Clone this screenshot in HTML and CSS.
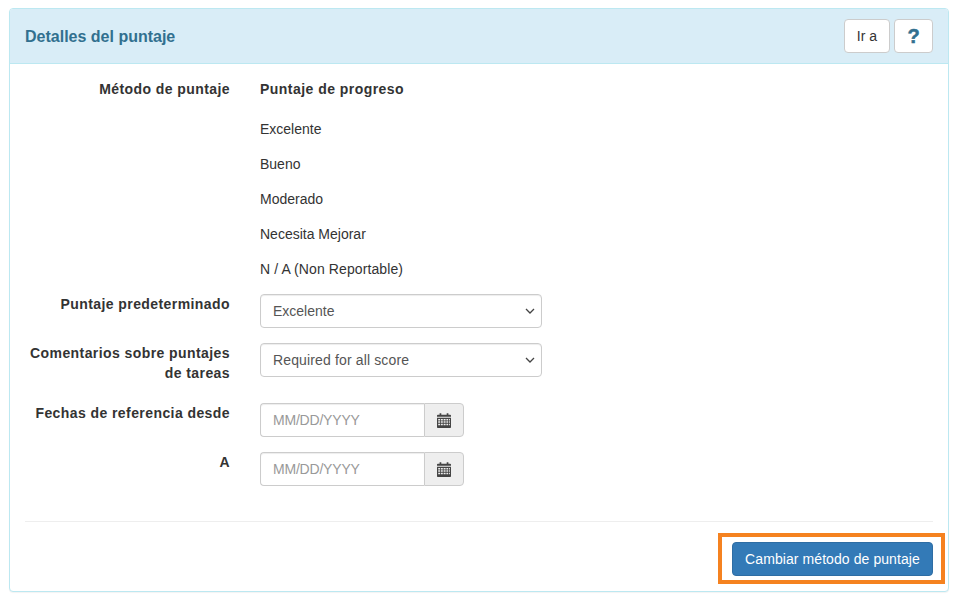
FILE: index.html
```html
<!DOCTYPE html>
<html lang="es">
<head>
<meta charset="utf-8">
<title>Detalles del puntaje</title>
<link rel="stylesheet" href="styles.css">
</head>
<body>
<section class="panel">
  <header class="panel-heading">
    <h3 class="panel-title">Detalles del puntaje</h3>
    <div class="heading-actions">
      <button class="btn btn-default" type="button">Ir a</button>
      <button class="btn btn-default btn-help" type="button">?</button>
    </div>
  </header>
  <div class="panel-body">
    <form class="form-grid">
      <label class="form-label">Método de puntaje</label>
      <div class="value value-strong">Puntaje de progreso</div>
      <span></span><div class="value">Excelente</div>
      <span></span><div class="value">Bueno</div>
      <span></span><div class="value">Moderado</div>
      <span></span><div class="value">Necesita Mejorar</div>
      <span></span><div class="value value-wide">N / A (Non Reportable)</div>

      <label class="form-label">Puntaje predeterminado</label>
      <select class="form-control select-wide"><option>Excelente</option></select>

      <label class="form-label">Comentarios sobre puntajes de tareas</label>
      <select class="form-control select-wide select-spaced"><option>Required for all score</option></select>

      <label class="form-label">Fechas de referencia desde</label>
      <div class="input-group">
        <input class="form-control group-input" type="text" placeholder="MM/DD/YYYY">
        <span class="group-addon">
          <svg class="cal-icon" viewBox="0 0 14 14" width="14" height="15" preserveAspectRatio="none" aria-hidden="true"><path d="M0 3.6V2.4C0 1.9.4 1.6.9 1.6H2.6V.3H4.3V1.6H9.7V.3H11.4V1.6H13.1C13.6 1.6 14 1.9 14 2.4V3.6Z"/><path fill-rule="evenodd" d="M0 4.4H14V13C14 13.6 13.6 14 13 14H1C.4 14 0 13.6 0 13ZM1.2 5.6V7H3V5.6ZM3.8 5.6V7H5.8V5.6ZM6.6 5.6V7H8.6V5.6ZM9.4 5.6V7H11.2V5.6ZM12 5.6V7H12.9V5.6ZM1.2 7.8V9.2H3V7.8ZM3.8 7.8V9.2H5.8V7.8ZM6.6 7.8V9.2H8.6V7.8ZM9.4 7.8V9.2H11.2V7.8ZM12 7.8V9.2H12.9V7.8ZM1.2 10V11.4H3V10ZM3.8 10V11.4H5.8V10ZM6.6 10V11.4H8.6V10ZM9.4 10V11.4H11.2V10ZM12 10V11.4H12.9V10Z"/></svg>
        </span>
      </div>

      <label class="form-label">A</label>
      <div class="input-group">
        <input class="form-control group-input" type="text" placeholder="MM/DD/YYYY">
        <span class="group-addon">
          <svg class="cal-icon" viewBox="0 0 14 14" width="14" height="15" preserveAspectRatio="none" aria-hidden="true"><path d="M0 3.6V2.4C0 1.9.4 1.6.9 1.6H2.6V.3H4.3V1.6H9.7V.3H11.4V1.6H13.1C13.6 1.6 14 1.9 14 2.4V3.6Z"/><path fill-rule="evenodd" d="M0 4.4H14V13C14 13.6 13.6 14 13 14H1C.4 14 0 13.6 0 13ZM1.2 5.6V7H3V5.6ZM3.8 5.6V7H5.8V5.6ZM6.6 5.6V7H8.6V5.6ZM9.4 5.6V7H11.2V5.6ZM12 5.6V7H12.9V5.6ZM1.2 7.8V9.2H3V7.8ZM3.8 7.8V9.2H5.8V7.8ZM6.6 7.8V9.2H8.6V7.8ZM9.4 7.8V9.2H11.2V7.8ZM12 7.8V9.2H12.9V7.8ZM1.2 10V11.4H3V10ZM3.8 10V11.4H5.8V10ZM6.6 10V11.4H8.6V10ZM9.4 10V11.4H11.2V10ZM12 10V11.4H12.9V10Z"/></svg>
        </span>
      </div>
    </form>
    <hr class="divider">
    <div class="panel-actions">
      <div class="action-wrap">
        <button class="btn btn-primary" type="button">Cambiar método de puntaje</button>
        <span class="highlight-box"></span>
      </div>
    </div>
  </div>
</section>
</body>
</html>
```
FILE: styles.css
```css
* { box-sizing: border-box; }
html, body { height: 100%; }
body {
  margin: 0;
  padding: 8px 5px 7px 9px;
  background: #fff;
  color: #333;
  font: 14px/20px "Liberation Sans", Arial, sans-serif;
  overflow: hidden;
}
.panel {
  height: 584px;
  border: 1px solid #bce8f1;
  border-radius: 4px;
  background: #fff;
  box-shadow: 0 1px 1px rgba(0,0,0,.05);
}
.panel-heading {
  display: flex;
  justify-content: space-between;
  align-items: center;
  height: 55px;
  padding: 10px 15px;
  background: #d9edf7;
  border-bottom: 1px solid #bce8f1;
  border-radius: 3px 3px 0 0;
}
.panel-title {
  margin: 2px 0 0;
  color: #31708f;
  font-size: 16px;
  font-weight: bold;
  line-height: 18px;
}
.heading-actions { display: flex; gap: 4px; }
.btn {
  height: 34px;
  padding: 6px 12px;
  border: 1px solid transparent;
  border-radius: 4px;
  font: 14px/20px "Liberation Sans", Arial, sans-serif;
  cursor: pointer;
}
.btn-default { background: #fff; border-color: #ccc; color: #333; }
.btn-help {
  width: 39px;
  padding: 6px 0;
  color: #31708f;
  font-size: 20px;
  font-weight: bold;
  -webkit-text-stroke: .5px #31708f;
}
.btn-primary {
  width: 201px;
  padding: 6px 0;
  background: #337ab7;
  border-color: #2e6da4;
  color: #fff;
  letter-spacing: .08px;
}
.panel-body { padding: 15px; }
.form-grid {
  display: grid;
  grid-template-columns: 205px 1fr;
  column-gap: 30px;
  row-gap: 15px;
  align-items: start;
  padding-bottom: 15px;
}
.form-label {
  display: block;
  margin-bottom: 5px;
  text-align: right;
  font-weight: bold;
  letter-spacing: .42px;
}
.value-strong { font-weight: bold; letter-spacing: .46px; }
.value-wide { letter-spacing: .1px; }
.form-control {
  display: block;
  height: 34px;
  padding: 6px 12px;
  border: 1px solid #ccc;
  border-radius: 4px;
  background: #fff;
  color: #555;
  font: 14px/20px "Liberation Sans", Arial, sans-serif;
  box-shadow: inset 0 1px 1px rgba(0,0,0,.075);
}
.select-wide {
  width: 282px;
  appearance: none;
  background-image: url("data:image/svg+xml,%3Csvg xmlns='http://www.w3.org/2000/svg' width='10' height='6'%3E%3Cpath d='M1 1l4 4 4-4' fill='none' stroke='%23444' stroke-width='1.3'/%3E%3C/svg%3E");
  background-repeat: no-repeat;
  background-position: right 6px center;
}
.select-spaced { letter-spacing: .14px; }
.input-group { display: flex; width: 204px; }
.group-input {
  flex: 1;
  min-width: 0;
  border-right: 0;
  border-radius: 4px 0 0 4px;
}
.group-input::placeholder { color: #999; opacity: 1; letter-spacing: -.2px; }
.group-addon {
  display: flex;
  align-items: center;
  justify-content: center;
  width: 40px;
  height: 34px;
  background: #eee;
  border: 1px solid #ccc;
  border-radius: 0 4px 4px 0;
}
.cal-icon { fill: #444; display: block; }
.divider {
  margin: 20px 0;
  border: 0;
  border-top: 1px solid #eee;
}
.panel-actions { display: flex; justify-content: flex-end; }
.action-wrap { position: relative; display: flex; }
.highlight-box {
  position: absolute;
  left: -14px;
  top: -9px;
  width: 227px;
  height: 51px;
  border: 4px solid #f58220;
  pointer-events: none;
}
```
